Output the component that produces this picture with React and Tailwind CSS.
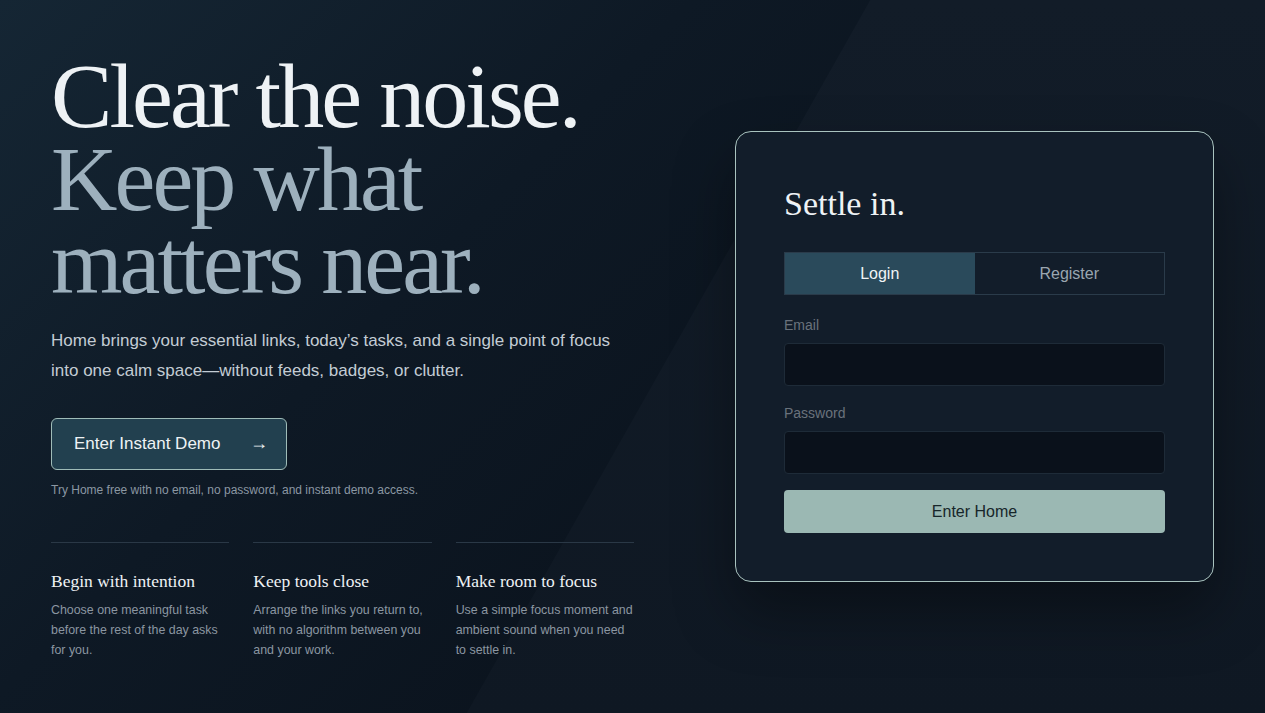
export default function App() {
  const serif = { fontFamily: '"Liberation Serif", Georgia, serif' };
  return (
    <div className="relative min-h-screen w-full overflow-hidden bg-[linear-gradient(135deg,#152634_0%,#0e1925_35%,#0a121c_70%,#0b131d_100%)] font-['Liberation_Sans',Arial,sans-serif]">
      <div className="pointer-events-none absolute inset-0 bg-[linear-gradient(180deg,#121c28_0%,#0f1823_100%)] [clip-path:polygon(68.8%_0,100%_0,100%_100%,36.9%_100%)]" />
      <div className="relative flex min-h-screen items-center justify-between px-[51px]">
        <div className="w-[583px] pt-[4px]">
          <h1 className="-mt-[3px] text-[92px] leading-[83px] tracking-[-0.032em]" style={serif}>
            <span className="block text-[#eef2f5]">Clear the noise.</span>
            <span className="block text-[#9db0bd]">Keep what</span>
            <span className="block text-[#9db0bd]">matters near.</span>
          </h1>
          <p className="mt-[22px] max-w-[570px] text-[17px] leading-[30px] text-[#c3ccd4]">
            Home brings your essential links, today’s tasks, and a single point of focus into one calm space—without feeds, badges, or clutter.
          </p>
          <button className="mt-[32px] flex h-[52px] w-[236px] items-center justify-between rounded-[6px] border border-[#9fbcb8] bg-[#22404f] pl-[22px] pr-[18px] text-[17px] text-[#eef3f5]">
            <span>Enter Instant Demo</span>
            <span className="text-[18px]">→</span>
          </button>
          <p className="mt-[11px] text-[12px] text-[#8b97a3]">
            Try Home free with no email, no password, and instant demo access.
          </p>
          <div className="mt-[43px] grid grid-cols-3 gap-[24px]">
            {[
              ["Begin with intention", "Choose one meaningful task before the rest of the day asks for you."],
              ["Keep tools close", "Arrange the links you return to, with no algorithm between you and your work."],
              ["Make room to focus", "Use a simple focus moment and ambient sound when you need to settle in."],
            ].map(([t, d]) => (
              <div key={t} className="border-t border-[#2a3846] pt-[27px]">
                <h3 className="text-[17.5px] leading-[22px] text-[#eef2f5]" style={serif}>{t}</h3>
                <p className="mt-[8px] text-[12.4px] leading-[20px] text-[#8b96a1]">{d}</p>
              </div>
            ))}
          </div>
        </div>
        <div className="w-[479px] rounded-[16px] border border-[#a9c3bf] bg-[#121d2a] px-[48px] pt-[52px] pb-[48px] shadow-[0_30px_60px_rgba(0,0,0,0.35)]">
          <h2 className="text-[34px] leading-[40px] text-[#eef2f5]" style={serif}>Settle in.</h2>
          <div className="mt-[28px] grid h-[43px] grid-cols-2 border border-[#2a3b4a]">
            <button className="bg-[#2a4a5b] text-[16px] text-[#f0f4f6]">Login</button>
            <button className="text-[16px] text-[#9aa6b0]">Register</button>
          </div>
          <label className="mt-[21px] block text-[14px] leading-[18px] text-[#6a727c]">Email</label>
          <div className="mt-[9px] h-[43px] rounded-[4px] border border-[#1e2b38] bg-[#0a111b]" />
          <label className="mt-[18px] block text-[14px] leading-[18px] text-[#6a727c]">Password</label>
          <div className="mt-[9px] h-[43px] rounded-[4px] border border-[#1e2b38] bg-[#0a111b]" />
          <button className="mt-[16px] h-[43px] w-full rounded-[4px] bg-[#9bb8b3] text-[16px] text-[#17262a]">Enter Home</button>
        </div>
      </div>
    </div>
  );
}
